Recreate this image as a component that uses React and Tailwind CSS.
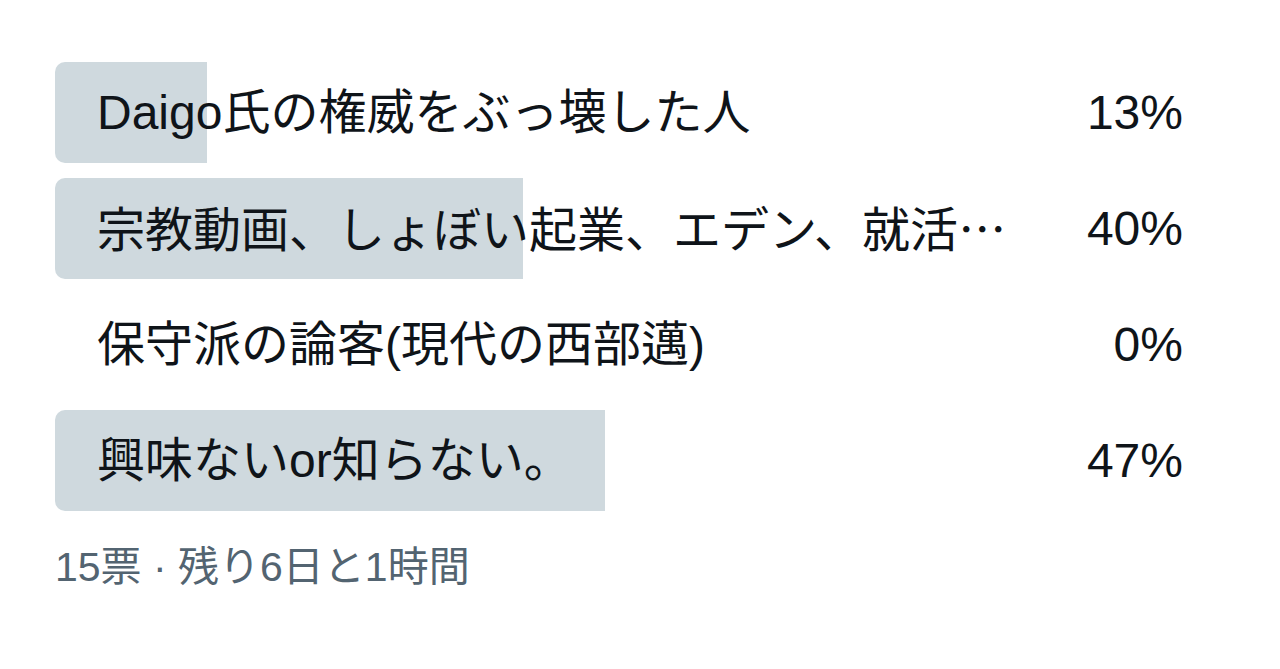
import React from 'react';

const options = [
  { label: 'Daigo氏の権威をぶっ壊した人', pct: 13 },
  { label: '宗教動画、しょぼい起業、エデン、就活', pct: 40, cut: true },
  { label: '保守派の論客(現代の西部邁)', pct: 0 },
  { label: '興味ないor知らない。', pct: 47 },
];

const font = { fontFamily: '"Liberation Sans", "Noto Sans CJK JP", sans-serif' };

export default function App() {
  return (
    <div className="min-h-[669px] w-[1280px] bg-white pl-[55px] pt-[62px]" style={font}>
      <div className="flex w-[1170px] flex-col gap-[15px]">
        {options.map((o) => (
          <div key={o.label} className="relative h-[101px]">
            {o.pct > 0 && (
              <div
                className="absolute inset-y-0 left-0 rounded-l-[10px] bg-[#cfd9de]"
                style={{ width: `${o.pct}%` }}
              />
            )}
            <div className="relative flex h-full items-center justify-between px-[42px] text-[48px] leading-none text-[#0f1419]">
              <span className="whitespace-nowrap">
                {o.label}
                {o.cut && <span style={{ fontFamily: '"Noto Sans CJK JP", sans-serif' }}>…</span>}
              </span>
              <span>{o.pct}%</span>
            </div>
          </div>
        ))}
      </div>
      <div className="mt-[36px] text-[41px] leading-none text-[#536471]">15票 · 残り6日と1時間</div>
    </div>
  );
}
